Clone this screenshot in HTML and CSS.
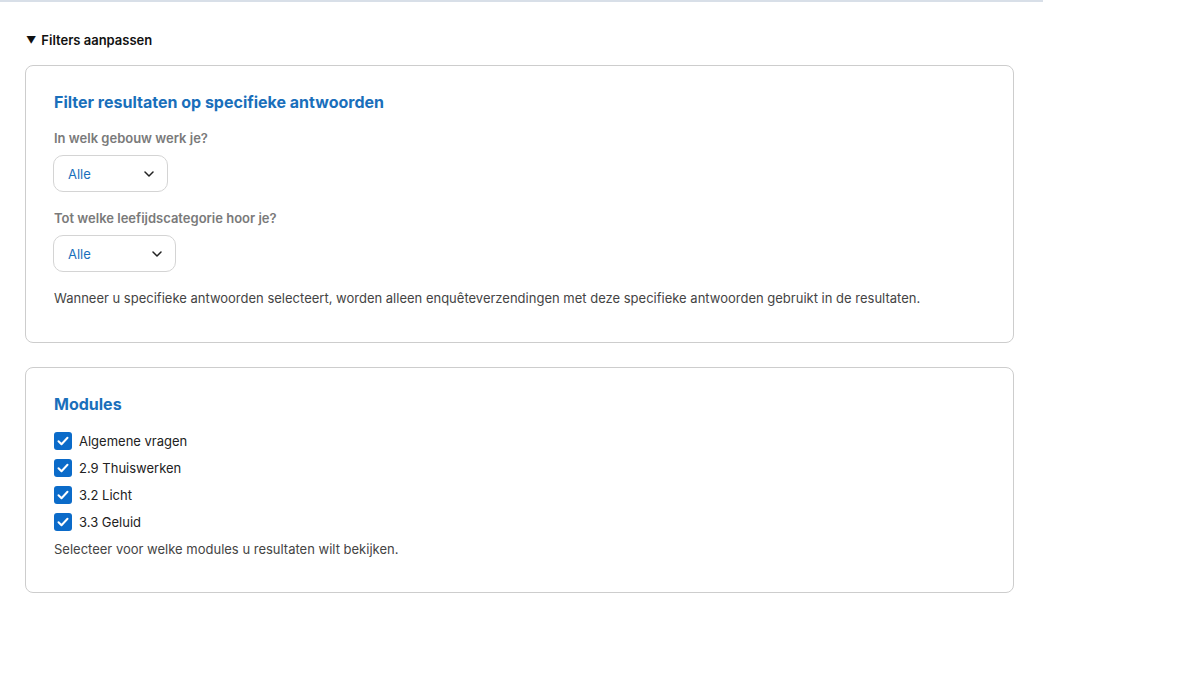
FILE: index.html
```html
<!DOCTYPE html>
<html lang="nl">
<head>
<meta charset="utf-8">
<title>Filters</title>
<link rel="stylesheet" href="styles.css">
</head>
<body>
<div class="topline"></div>
<div class="page">
  <div class="summary"><span class="tri">&#9660;</span>Filters aanpassen</div>

  <section class="card">
    <h2 class="card-title">Filter resultaten op specifieke antwoorden</h2>
    <div class="field">
      <div class="label">In welk gebouw werk je?</div>
      <div class="select sel1"><span>Alle</span>
        <svg class="chev" width="10" height="6" viewBox="0 0 10 6"><path d="M1 1l4 4 4-4" fill="none" stroke="#222" stroke-width="1.5" stroke-linecap="round" stroke-linejoin="round"/></svg>
      </div>
    </div>
    <div class="field">
      <div class="label">Tot welke leefijdscategorie hoor je?</div>
      <div class="select sel2"><span>Alle</span>
        <svg class="chev" width="10" height="6" viewBox="0 0 10 6"><path d="M1 1l4 4 4-4" fill="none" stroke="#222" stroke-width="1.5" stroke-linecap="round" stroke-linejoin="round"/></svg>
      </div>
    </div>
    <p class="help">Wanneer u specifieke antwoorden selecteert, worden alleen enquêteverzendingen met deze specifieke antwoorden gebruikt in de resultaten.</p>
  </section>

  <section class="card card2">
    <h2 class="card-title">Modules</h2>
    <ul class="checks">
      <li><span class="cb"><svg width="12" height="10" viewBox="0 0 12 10"><path d="M1.5 5.2l3 3 6-6.4" fill="none" stroke="#fff" stroke-width="2" stroke-linecap="round" stroke-linejoin="round"/></svg></span>Algemene vragen</li>
      <li><span class="cb"><svg width="12" height="10" viewBox="0 0 12 10"><path d="M1.5 5.2l3 3 6-6.4" fill="none" stroke="#fff" stroke-width="2" stroke-linecap="round" stroke-linejoin="round"/></svg></span>2.9 Thuiswerken</li>
      <li><span class="cb"><svg width="12" height="10" viewBox="0 0 12 10"><path d="M1.5 5.2l3 3 6-6.4" fill="none" stroke="#fff" stroke-width="2" stroke-linecap="round" stroke-linejoin="round"/></svg></span>3.2 Licht</li>
      <li><span class="cb"><svg width="12" height="10" viewBox="0 0 12 10"><path d="M1.5 5.2l3 3 6-6.4" fill="none" stroke="#fff" stroke-width="2" stroke-linecap="round" stroke-linejoin="round"/></svg></span>3.3 Geluid</li>
    </ul>
    <p class="help help2">Selecteer voor welke modules u resultaten wilt bekijken.</p>
  </section>
</div>
</body>
</html>
```
FILE: styles.css
```css
* { box-sizing: border-box; }
html, body { margin: 0; padding: 0; background: #fff; }
body {
  font-family: Inter, "Noto Sans", "Liberation Sans", sans-serif;
  font-size: 13px;
  color: #333;
}
.topline {
  width: 1043px;
  height: 2px;
  background: #d8dfe8;
}
.page {
  width: 1014px;
  padding-left: 25px;
  padding-top: 29px;
}
.summary {
  display: flex;
  align-items: center;
  font-weight: 600;
  font-size: 13px;
  line-height: 18px;
  color: #111;
  padding-left: 1px;
  margin-bottom: 16px;
}
.tri {
  font-size: 10px;
  margin-right: 5px;
  line-height: 18px;
}
.card {
  border: 1px solid #cdcdcd;
  border-radius: 8px;
  padding: 27px 28px 34px;
}
.card2 { margin-top: 24px; padding-bottom: 33px; }
.card-title {
  margin: 0;
  font-size: 16px;
  line-height: 18px;
  font-weight: 700;
  color: #1a6fbb;
}
.field { margin-top: 18px; }
.field + .field { margin-top: 17px; }
.label {
  font-size: 13px;
  line-height: 18px;
  font-weight: 600;
  color: #7a7a7a;
}
.select {
  margin-top: 8px;
  margin-left: -1px;
  height: 37px;
  border: 1px solid #d4d4d4;
  border-radius: 10px;
  display: flex;
  align-items: center;
  justify-content: space-between;
  padding: 0 13px 0 14px;
  color: #1a6fbb;
  font-size: 13px;
}
.sel1 { width: 115px; }
.sel2 { width: 123px; }
.chev { display: block; }
.help {
  margin: 16px 0 0;
  font-size: 13px;
  line-height: 20px;
  color: #444;
}
.checks {
  list-style: none;
  margin: 14px 0 0;
  padding: 0;
}
.checks li {
  display: flex;
  align-items: center;
  height: 27px;
  font-size: 13px;
  color: #222;
}
.cb {
  width: 18px;
  height: 18px;
  border-radius: 3px;
  background: #0b6bc9;
  display: flex;
  align-items: center;
  justify-content: center;
  margin-right: 7px;
}
.cb svg { display: block; }
.help2 { margin-top: 4px; }
```
